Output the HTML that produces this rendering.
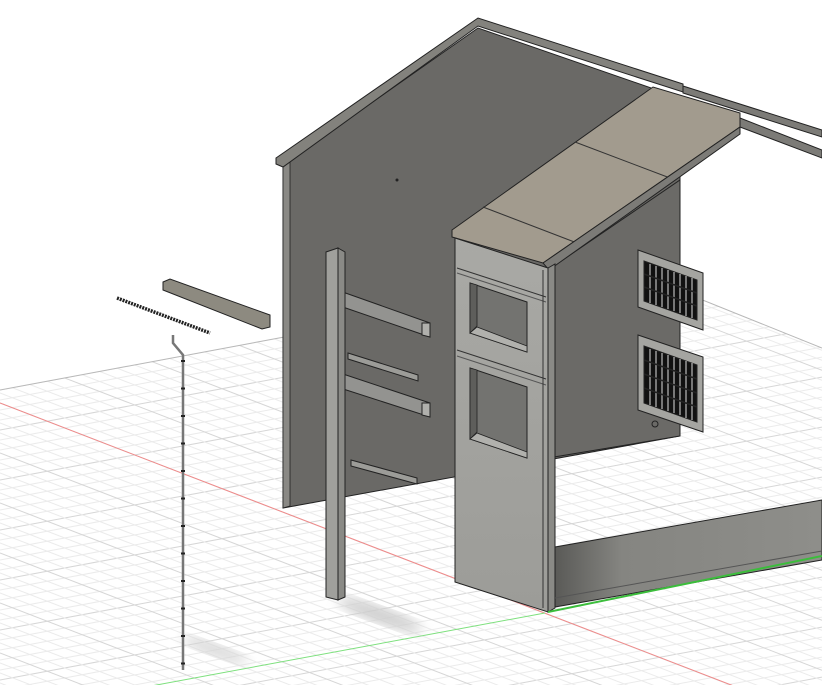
<!DOCTYPE html>
<html><head><meta charset="utf-8"><style>html,body{margin:0;padding:0;background:#fff;width:822px;height:685px;overflow:hidden}svg{display:block}</style></head>
<body>
<svg width="822" height="685" viewBox="0 0 822 685" xmlns="http://www.w3.org/2000/svg">
<defs>
<clipPath id="g"><polygon points="0,390 633,272 822,348 822,685 0,685"/></clipPath>
<filter id="b"><feGaussianBlur stdDeviation="6"/></filter>
<linearGradient id="pl" x1="0" y1="0" x2="0" y2="1"><stop offset="0" stop-color="#a9a9a5"/><stop offset="1" stop-color="#9c9c98"/></linearGradient>
<linearGradient id="fl" x1="0" y1="0" x2="1" y2="0"><stop offset="0" stop-color="#5a5a57"/><stop offset="0.25" stop-color="#858581"/><stop offset="1" stop-color="#8e8e8a"/></linearGradient>
</defs>
<rect width="822" height="685" fill="#fff"/>
<g id="G" clip-path="url(#g)" stroke-width="1"></g>
<g clip-path="url(#g)">
<line x1="0" y1="403" x2="822" y2="720" stroke="#f08a8a" stroke-width="1"/>
<line x1="545" y1="613" x2="0" y2="714" stroke="#7ee07e" stroke-width="1"/>
</g>
<polyline points="0,390 633,272 822,348" fill="none" stroke="#b8b8b8" stroke-width="1"/>
<ellipse cx="380" cy="615" rx="45" ry="8" fill="#ccc" filter="url(#b)" transform="rotate(20 380 615)"/>
<ellipse cx="215" cy="650" rx="35" ry="6" fill="#d4d4d4" filter="url(#b)" transform="rotate(20 215 650)"/>
<polygon points="283,165 478,28 680,98 680,436 283,508" fill="#6a6966" stroke="#222" stroke-width="1"/>
<polygon points="283,165 290,161 290,506 283,508" fill="#8a8985" stroke="#222" stroke-width="0.8"/>
<polygon points="276,158 478,18 683,84 683,92 478,26 283,167 276,164" fill="#83827d" stroke="#222" stroke-width="1"/>
<circle cx="397" cy="180" r="1.5" fill="#222"/>
<polygon points="548,270 680,180 680,436 548,458" fill="#6b6a67" stroke="#222" stroke-width="1"/>
<g stroke="#222" stroke-width="1">
<polygon points="638,250 703,273 703,330 638,307" fill="#a5a5a1"/>
<polygon points="644,261 697,280 697,320 644,301" fill="#111"/>
<polygon points="638,335 703,357 703,432 638,410" fill="#a5a5a1"/>
<polygon points="644,346 697,365 697,422 644,403" fill="#111"/>
</g>
<g stroke="#ddd" stroke-width="1">
<line x1="650" y1="264" x2="650" y2="303"/><line x1="656" y1="266" x2="656" y2="305"/><line x1="662" y1="268" x2="662" y2="307"/><line x1="668" y1="270" x2="668" y2="309"/><line x1="674" y1="272" x2="674" y2="311"/><line x1="680" y1="274" x2="680" y2="313"/><line x1="686" y1="276" x2="686" y2="316"/><line x1="692" y1="278" x2="692" y2="318"/>
<line x1="650" y1="349" x2="650" y2="405"/><line x1="656" y1="351" x2="656" y2="407"/><line x1="662" y1="353" x2="662" y2="409"/><line x1="668" y1="355" x2="668" y2="411"/><line x1="674" y1="357" x2="674" y2="413"/><line x1="680" y1="359" x2="680" y2="415"/><line x1="686" y1="361" x2="686" y2="418"/><line x1="692" y1="363" x2="692" y2="420"/>
</g>
<g stroke="#222" stroke-width="1.5">
<line x1="644" y1="274" x2="697" y2="293"/><line x1="644" y1="287" x2="697" y2="306"/>
<line x1="644" y1="360" x2="697" y2="379"/><line x1="644" y1="374" x2="697" y2="393"/><line x1="644" y1="388" x2="697" y2="407"/>
</g>
<circle cx="655" cy="424" r="3" fill="none" stroke="#222"/>
<!-- right roof continuation -->
<polygon points="683,86 822,130 822,137 683,93" fill="#7c7b77" stroke="#222" stroke-width="1"/>
<polygon points="740,118 822,150 822,158 740,127" fill="#7c7b77" stroke="#222" stroke-width="1"/>
<polygon points="452,230 653,87 740,113 740,127 543,263 452,237" fill="#a29b8e" stroke="#222" stroke-width="1"/>
<line x1="483" y1="207" x2="577" y2="243" stroke="#333"/>
<line x1="575" y1="142" x2="670" y2="178" stroke="#333"/>
<polygon points="543,263 740,127 740,134 549,270" fill="#7c7b77" stroke="#222" stroke-width="1"/>
<polygon points="455,238 548,268 548,612 455,582" fill="url(#pl)" stroke="#222" stroke-width="1"/>
<polygon points="548,268 555,264 555,608 548,612" fill="#8a8a86" stroke="#222" stroke-width="1"/>
<line x1="457" y1="268" x2="546" y2="297" stroke="#333"/>
<line x1="457" y1="273" x2="546" y2="302" stroke="#555"/>
<line x1="457" y1="350" x2="546" y2="379" stroke="#333"/>
<line x1="457" y1="356" x2="546" y2="385" stroke="#555"/>
<line x1="543" y1="270" x2="543" y2="608" stroke="#333"/>
<polygon points="470,283 527,302 527,352 470,333" fill="#737370" stroke="#222"/>
<polygon points="470,283 477,285 477,326 470,333" fill="#5e5e5b" stroke="#222" stroke-width="0.8"/>
<polygon points="470,333 527,352 527,346 477,327" fill="#b1b1ad" stroke="#222" stroke-width="0.8"/>
<polygon points="470,368 527,387 527,458 470,439" fill="#737370" stroke="#222"/>
<polygon points="470,368 477,370 477,432 470,439" fill="#5e5e5b" stroke="#222" stroke-width="0.8"/>
<polygon points="470,439 527,458 527,452 477,433" fill="#b1b1ad" stroke="#222" stroke-width="0.8"/>
<polygon points="555,547 822,500 822,560 555,607" fill="url(#fl)" stroke="#222" stroke-width="1"/>
<line x1="555" y1="598" x2="822" y2="551" stroke="#555"/>
<line x1="548" y1="612" x2="822" y2="556" stroke="#3cbd3c" stroke-width="2"/>
<g stroke="#222" stroke-width="1">
<polygon points="337,290 430,323 430,337 337,305" fill="#939390"/>
<polygon points="422,323 430,323 430,337 422,335" fill="#b0b0ac"/>
<polygon points="348,353 418,375 418,381 348,359" fill="#9c9c98"/>
<polygon points="337,372 430,403 430,417 337,387" fill="#939390"/>
<polygon points="422,403 430,403 430,417 422,415" fill="#b0b0ac"/>
<polygon points="351,460 417,478 417,484 351,466" fill="#9c9c98"/>
<polygon points="326,252 338,248 338,600 326,597" fill="#a0a09c"/>
<polygon points="338,248 345,252 345,597 338,600" fill="#8a8a86"/>
</g>
<polygon points="163,282 170,279 270,315 270,327 262,329 163,290" fill="#8d8a80" stroke="#222" stroke-width="1"/>
<line x1="117" y1="298" x2="210" y2="333" stroke="#222" stroke-width="3.5" stroke-dasharray="2 1"/>
<polyline points="173,335 173,343 183,355 183,670" fill="none" stroke="#777" stroke-width="2.5"/>
<line x1="183" y1="360" x2="183" y2="668" stroke="#222" stroke-width="4" stroke-dasharray="2 25.5"/>
</svg>
<script>
(function(){var p=document.getElementById('G');var ns='http://www.w3.org/2000/svg';
for(var i=-40;i<120;i++){var c=380+i*10;var l=document.createElementNS(ns,'line');l.setAttribute('x1',0);l.setAttribute('y1',c);l.setAttribute('x2',822);l.setAttribute('y2',c-0.186*822);l.setAttribute('stroke',i%5==0?'#d6d6d6':'#ebebeb');p.appendChild(l);}
for(var j=-120;j<80;j++){var d=403+j*10;var m=document.createElementNS(ns,'line');m.setAttribute('x1',0);m.setAttribute('y1',d);m.setAttribute('x2',822);m.setAttribute('y2',d+0.386*822);m.setAttribute('stroke',j%5==0?'#d6d6d6':'#ebebeb');p.appendChild(m);}
})();
</script>
</body></html>
